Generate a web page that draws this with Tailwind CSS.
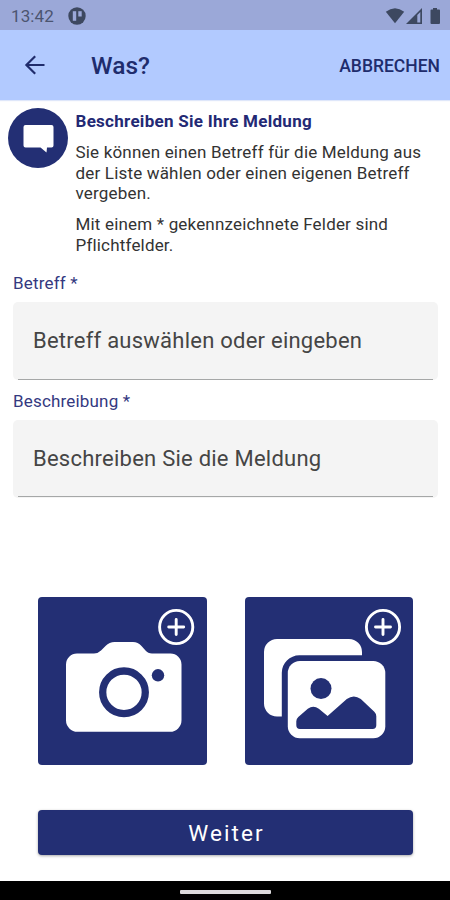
<!DOCTYPE html>
<html lang="de">
<head>
  <meta charset="UTF-8">
  <meta name="viewport" content="width=device-width, initial-scale=1.0">
  <title>Was?</title>
  <script src="https://cdn.jsdelivr.net/npm/@tailwindcss/browser@4"></script>
</head>
<body class="bg-white">
<div class="w-[450px] h-[900px] flex flex-col overflow-hidden bg-white font-['Roboto',sans-serif]">

  <!-- status bar -->
  <div class="h-[30px] shrink-0 bg-[#9ba8d8] flex items-center pl-[11px] pr-[9px] pt-px text-[#4c5570]">
    <span class="text-[17px] tracking-[0.1px] w-[57px] pt-px leading-none">13:42</span>
    <svg class="size-[18px]" viewBox="0 0 18 18">
      <circle cx="9" cy="9" r="8.7" fill="#3d4860"/>
      <path d="M4.800 4.200h3.400v9.600H4.800z" fill="#9ba8d8"/>
      <path d="M10.300 4.200h3.400v5.300h-3.400z" fill="#9ba8d8"/>
    </svg>
    <svg class="w-[56px] h-[18px] ml-auto" viewBox="0 0 56 18" fill="#3d4860">
      <path d="M.8 4.800Q10 -2.200 19.200 4.800L10 16.300z"/>
      <path d="M37 1V17H21z"/>
      <path d="M32.300 8l3-3V15.500h-3z" fill="#9ba8d8"/>
      <path d="M48 1h4v1.600h2.200a.8.8 0 0 1 .8.8V16a1 1 0 0 1-1 1h-7.500a1 1 0 0 1-1-1V3.400a.8.8 0 0 1 .8-.8H48z"/>
    </svg>
  </div>

  <!-- app bar -->
  <header class="h-[70px] shrink-0 bg-[#b2caff] flex items-center pl-[24px] pr-[10px] text-[#202c6c] shadow-[0_1px_1px_#dfe7fa]">
    <svg class="size-[22px]" viewBox="0 0 22 22" fill="none" stroke="currentColor" stroke-width="2.200">
      <path d="M20.500 11H2.500M11.200 2.200L2.400 11l8.800 8.800"/>
    </svg>
    <h1 class="ml-[45px] pt-[3px] text-[24.5px] font-medium leading-none">Was?</h1>
    <button type="button" class="ml-auto pt-[4px] text-[17.5px] font-medium leading-none">ABBRECHEN</button>
  </header>

  <main class="flex-1 flex flex-col">
    <section class="flex pt-[8px] pl-[8px] h-[173px]">
      <svg class="size-[60px] shrink-0" viewBox="0 0 60 60">
        <circle cx="30" cy="30" r="30" fill="#232f74"/>
        <path d="M17.500 17h26a2 2 0 0 1 2 2v18.500a2 2 0 0 1-2 2h-4.500l-.5 5-6-5h-15a2 2 0 0 1-2-2V19a2 2 0 0 1 2-2z" fill="#fff"/>
      </svg>
      <div class="pl-[7.500px] pt-[3px] text-[17px] tracking-[0.18px] leading-[20.5px] text-[#333] whitespace-nowrap">
        <h2 class="font-bold tracking-[0.28px] text-[#232974]">Beschreiben Sie Ihre Meldung</h2>
        <p class="mt-[10.500px]">Sie können einen Betreff für die Meldung aus<br>der Liste wählen oder einen eigenen Betreff<br>vergeben.</p>
        <p class="mt-[10.500px]">Mit einem * gekennzeichnete Felder sind<br>Pflichtfelder.</p>
      </div>
    </section>

    <section class="pl-[13px] pr-[12px]">
      <div class="h-[118px]">
        <label class="block h-[29px] text-[17px] tracking-[0.18px] leading-[20px] text-[#34397f]">Betreff *</label>
        <div class="h-[78px] rounded-[5px] bg-[#f4f4f4] px-[5px]">
          <div class="h-[78px] border-b border-[#a5a7a7] flex items-center pl-[15px] text-[22px] tracking-[0.24px] text-[#454545]">Betreff auswählen oder eingeben</div>
        </div>
      </div>
      <div class="h-[118px]">
        <label class="block h-[29px] text-[17px] tracking-[0.18px] leading-[20px] text-[#34397f]">Beschreibung *</label>
        <div class="h-[78px] rounded-[5px] bg-[#f4f4f4] px-[5px]">
          <div class="h-[77px] border-b border-[#a5a7a7] flex items-center pl-[15px] text-[22px] tracking-[0.24px] text-[#454545]">Beschreiben Sie die Meldung</div>
        </div>
      </div>
    </section>

    <section class="mt-[87.500px] pl-[38px] pr-[37px] flex justify-between">
      <!-- camera -->
      <button type="button" class="size-[168.5px] rounded-[4px] bg-[#232f74]">
        <svg class="size-full" viewBox="0 0.7 168.5 168.5">
          <path d="M39 57.200h17q4 0 7-3l4.500-4.500q4-4 9-4H95q5 0 8.500 4l4 4.500q2.500 3 6.500 3h18.500a11 11 0 0 1 11 11V124a11.500 11.500 0 0 1-11.500 11.500H39.500A11.500 11.500 0 0 1 28 124V68.200a11 11 0 0 1 11-11z" fill="#fff"/>
          <circle cx="86" cy="96" r="21.300" fill="none" stroke="#232f74" stroke-width="7.300"/>
          <circle cx="120" cy="79" r="6.200" fill="#232f74"/>
          <g fill="none" stroke="#fff" stroke-width="2.900">
            <circle cx="138.200" cy="30.700" r="16.600"/>
            <path d="M138.200 23.200v15M130.700 30.700h15" stroke-linecap="round"/>
          </g>
        </svg>
      </button>
      <!-- gallery -->
      <button type="button" class="size-[168.5px] rounded-[4px] bg-[#232f74]">
        <svg class="size-full" viewBox="0.7 0.7 168.5 168.5">
          <path d="M32.700 42.700h72a13 13 0 0 1 13 13V59H55a17.500 17.500 0 0 0-17.500 17.500v43.800h-4.800a13 13 0 0 1-13-13V55.700a13 13 0 0 1 13-13z" fill="#fff"/>
          <rect x="43.500" y="64.700" width="97.500" height="77.300" rx="12" fill="#fff"/>
          <circle cx="76.700" cy="92.300" r="10.500" fill="#232f74"/>
          <path d="M52 125q0-2.500 2-4.300l9.500-8.200q5.500-4 11 0l8.800 7.200 19.200-17q7-5 14 0l13.500 12.800q2 2 2 4.500v9q0 3.700-3.700 3.700H55.700q-3.700 0-3.700-3.700z" fill="#232f74"/>
          <g fill="none" stroke="#fff" stroke-width="2.900">
            <circle cx="138.700" cy="30.700" r="16.600"/>
            <path d="M138.700 23.200v15M131.200 30.700h15" stroke-linecap="round"/>
          </g>
        </svg>
      </button>
    </section>

    <button type="button" class="mt-[45px] ml-[38px] mr-[37px] h-[44.500px] shrink-0 rounded-[4px] bg-[#232f74] pl-[2px] pt-px text-white text-[22.5px] tracking-[2.100px] leading-none shadow-[0_1px_3px_rgba(0,0,0,0.35)]">Weiter</button>
  </main>

  <!-- navigation bar -->
  <div class="h-[19px] shrink-0 bg-black flex justify-center pt-[9px]">
    <div class="w-[91px] h-[4px] rounded-[1px] bg-[#dcdadc]"></div>
  </div>
</div>
</body>
</html>
